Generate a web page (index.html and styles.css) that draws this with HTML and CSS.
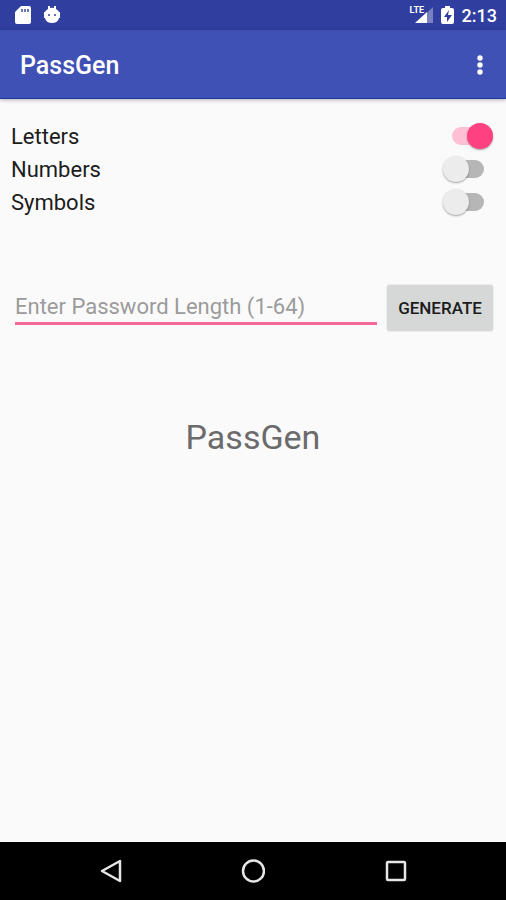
FILE: index.html
```html
<!DOCTYPE html>
<html lang="en">
<head>
<meta charset="utf-8">
<meta name="viewport" content="width=device-width, initial-scale=1">
<title>PassGen</title>
<link rel="stylesheet" href="styles.css">
</head>
<body>
<div class="status-bar">
  <div class="status-group notifications">
    <svg width="16" height="20" viewBox="0 0 16 20" aria-hidden="true">
      <path fill="#fff" d="M6 1h8q2 0 2 2v14q0 2-2 2H2q-2 0-2-2V7z"/>
      <path fill="#303f9f" d="M6 4h2v3H6zM9 4h2v3H9zM12 4h2v3h-2z" opacity=".7"/>
    </svg>
    <svg width="16" height="20" viewBox="0 0 16 20" aria-hidden="true">
      <path fill="#fff" d="M4 4V1h2v2q2-.5 4 0V1h2v3q2 1 3 3h1v6h-1q-1 5-7 5t-7-5H0V7h1q1-2 3-3z"/>
      <circle cx="5" cy="10" r="1" fill="#303f9f"/>
      <circle cx="11" cy="10" r="1" fill="#303f9f"/>
    </svg>
  </div>
  <div class="status-group">
    <div class="signal">
      <svg width="22" height="16" viewBox="0 0 22 16" aria-hidden="true">
        <path fill="#fff" opacity=".35" d="M22 0v16H5z"/>
        <path fill="#fff" d="M16 5v11H4z"/>
      </svg>
      <span class="network">LTE</span>
    </div>
    <svg width="13" height="20" viewBox="0 0 13 20" aria-hidden="true">
      <path fill="#fff" d="M4 1h5v2h2q2 0 2 2v12q0 2-2 2H2q-2 0-2-2V5q0-2 2-2h2z"/>
      <path fill="#303f9f" d="M8 5 3 12h3v5l5-7H7z"/>
    </svg>
    <time class="clock">2:13</time>
  </div>
</div>
<header class="app-bar">
  <h1 class="app-title">PassGen</h1>
  <button class="menu-button" type="button" aria-label="More options">
    <svg width="6" height="20" viewBox="0 0 6 20" fill="#fff" aria-hidden="true">
      <circle cx="3" cy="3" r="2.7"/><circle cx="3" cy="10" r="2.7"/><circle cx="3" cy="17" r="2.7"/>
    </svg>
  </button>
</header>
<main class="content">
  <div class="options">
    <label class="option"><span class="option-name">Letters</span><input class="switch" type="checkbox" role="switch" checked></label>
    <label class="option"><span class="option-name">Numbers</span><input class="switch" type="checkbox" role="switch"></label>
    <label class="option"><span class="option-name">Symbols</span><input class="switch" type="checkbox" role="switch"></label>
  </div>
  <form class="generator">
    <input class="length-field" type="text" inputmode="numeric" aria-label="Password length" placeholder="Enter Password Length (1-64)">
    <button class="generate" type="button">GENERATE</button>
  </form>
  <output class="result">PassGen</output>
</main>
<nav class="nav-bar">
  <button class="nav-button" type="button" aria-label="Back">
    <svg width="24" height="24" viewBox="0 0 24 24" aria-hidden="true"><path d="M21 2v20L3 12z"/></svg>
  </button>
  <button class="nav-button" type="button" aria-label="Home">
    <svg width="24" height="24" viewBox="0 0 24 24" aria-hidden="true"><circle cx="12.5" cy="12" r="10.5"/></svg>
  </button>
  <button class="nav-button" type="button" aria-label="Recent apps">
    <svg width="24" height="24" viewBox="0 0 24 24" aria-hidden="true"><rect x="4" y="3" width="18" height="18" rx="1"/></svg>
  </button>
</nav>
</body>
</html>
```
FILE: styles.css
```css
* {
  box-sizing: border-box;
}

body {
  display: flex;
  flex-direction: column;
  min-height: 100vh;
  margin: 0;
  background: #fafafa;
  color: #1c1c1c;
  font-family: Roboto, "Liberation Sans", sans-serif;
  font-size: 22px;
}

button {
  padding: 0;
  border: 0;
  background: none;
  font: inherit;
}

svg {
  display: block;
}

.status-bar {
  display: flex;
  align-items: center;
  justify-content: space-between;
  height: 30px;
  padding: 0 9px 0 15px;
  background: #303f9f;
  color: #fff;
}

.status-group {
  display: flex;
  align-items: center;
  gap: 8px;
}

.notifications {
  gap: 13px;
}

.signal {
  position: relative;
}

.network {
  position: absolute;
  top: -2px;
  left: -1px;
  font-size: 9px;
  font-weight: 700;
  line-height: 10px;
}

.clock {
  font-size: 18px;
  font-weight: 500;
}

.app-bar {
  display: flex;
  align-items: center;
  justify-content: space-between;
  height: 69px;
  padding: 2px 13px 0 20px;
  border-bottom: 1px solid #1f38a5;
  background: #3f51b5;
  box-shadow: 0 1px 4px rgba(0, 0, 0, 0.3);
  color: #fff;
}

.app-title {
  margin: 0;
  font-size: 25px;
  font-weight: 500;
}

.menu-button {
  display: grid;
  place-items: center;
  width: 27px;
  height: 48px;
}

.content {
  display: flex;
  flex: 1;
  flex-direction: column;
  padding: 20px 13px 20px 11px;
}

.option {
  display: flex;
  align-items: center;
  justify-content: space-between;
  height: 33px;
}

.option-name {
  padding-top: 2px;
}

.switch {
  display: flex;
  align-items: center;
  width: 50px;
  height: 26px;
  margin: 0;
  padding: 0 9px;
  appearance: none;
}

.switch::before {
  flex: none;
  width: 32px;
  height: 18px;
  border-radius: 9px;
  background: #b6b6b6;
  content: "";
}

.switch::after {
  flex: none;
  width: 26px;
  height: 26px;
  margin-left: -41px;
  border-radius: 50%;
  background: #ececec;
  box-shadow: 0 1px 2px rgba(0, 0, 0, 0.35);
  content: "";
}

.switch:checked::before {
  background: #ffc0d5;
}

.switch:checked::after {
  margin-left: -17px;
  background: #ff4081;
}

.generator {
  display: flex;
  align-items: center;
  gap: 10px;
  margin-top: 67px;
  padding-left: 4px;
}

.length-field {
  flex: 1;
  min-width: 0;
  height: 34px;
  padding: 0;
  border: 0;
  border-bottom: 3px solid #f5699a;
  border-radius: 0;
  outline: 0;
  background: none;
  color: inherit;
  font: inherit;
}

.length-field::placeholder {
  color: #9b9b9b;
  opacity: 1;
}

.generate {
  width: 106px;
  height: 46px;
  border-radius: 3px;
  background: #d6d7d7;
  box-shadow: 0 0 2px rgba(0, 0, 0, 0.2);
  color: #1c1c1c;
  font-size: 17px;
  font-weight: 500;
}

.result {
  margin-top: 85px;
  padding-left: 2px;
  color: #6b6b6b;
  font-size: 34px;
  line-height: 42px;
  text-align: center;
}

.nav-bar {
  display: flex;
  justify-content: center;
  height: 58px;
  background: #000;
}

.nav-button {
  display: grid;
  flex: 0 1 142px;
  place-items: center;
}

.nav-button svg {
  fill: none;
  stroke: #e6e6e6;
  stroke-linejoin: round;
  stroke-width: 2.5;
}
```
